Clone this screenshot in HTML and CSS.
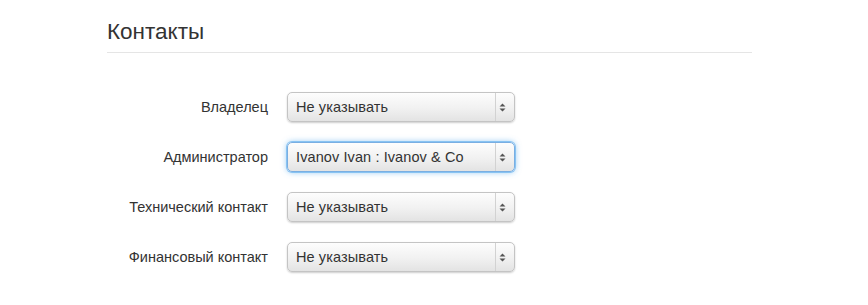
FILE: index.html
```html
<!DOCTYPE html>
<html lang="ru">
<head>
  <meta charset="UTF-8">
  <title>Контакты</title>
  <link rel="stylesheet" href="styles.css">
</head>
<body>
  <div class="container">
    <form class="form-horizontal">
      <div class="legend">Контакты</div>

      <div class="control-group">
        <label class="control-label">Владелец</label>
        <div class="controls">
          <div class="select">
            <span class="select-value">Не указывать</span>
            <span class="select-arrows">
              <svg width="7" height="9" viewBox="0 0 7 9"><path d="M3.5 0.5 L6.5 3.5 L0.5 3.5 Z M0.5 5.5 L6.5 5.5 L3.5 8.5 Z" fill="#555"/></svg>
            </span>
          </div>
        </div>
      </div>

      <div class="control-group">
        <label class="control-label">Администратор</label>
        <div class="controls">
          <div class="select focused">
            <span class="select-value">Ivanov Ivan : Ivanov &amp; Co</span>
            <span class="select-arrows">
              <svg width="7" height="9" viewBox="0 0 7 9"><path d="M3.5 0.5 L6.5 3.5 L0.5 3.5 Z M0.5 5.5 L6.5 5.5 L3.5 8.5 Z" fill="#555"/></svg>
            </span>
          </div>
        </div>
      </div>

      <div class="control-group">
        <label class="control-label">Технический контакт</label>
        <div class="controls">
          <div class="select">
            <span class="select-value">Не указывать</span>
            <span class="select-arrows">
              <svg width="7" height="9" viewBox="0 0 7 9"><path d="M3.5 0.5 L6.5 3.5 L0.5 3.5 Z M0.5 5.5 L6.5 5.5 L3.5 8.5 Z" fill="#555"/></svg>
            </span>
          </div>
        </div>
      </div>

      <div class="control-group">
        <label class="control-label">Финансовый контакт</label>
        <div class="controls">
          <div class="select">
            <span class="select-value">Не указывать</span>
            <span class="select-arrows">
              <svg width="7" height="9" viewBox="0 0 7 9"><path d="M3.5 0.5 L6.5 3.5 L0.5 3.5 Z M0.5 5.5 L6.5 5.5 L3.5 8.5 Z" fill="#555"/></svg>
            </span>
          </div>
        </div>
      </div>
    </form>
  </div>
</body>
</html>
```

FILE: styles.css
```css
body {
  margin: 0;
  background: #fff;
  font-family: "Liberation Sans", Arial, sans-serif;
  font-size: 14.5px;
  line-height: 20px;
  color: #333;
}
.container {
  width: 645px;
  margin-left: 107px;
  padding-top: 12px;
}
.legend {
  font-size: 22.5px;
  line-height: 40px;
  color: #333;
  border-bottom: 1px solid #e5e5e5;
  margin-bottom: 39px;
}
.control-group {
  display: flex;
  align-items: center;
  margin-bottom: 20px;
}
.control-label {
  width: 161px;
  text-align: right;
  margin-right: 19px;
  color: #333;
}
.select {
  display: flex;
  align-items: stretch;
  width: 226px;
  height: 28px;
  border: 1px solid #c4c4c4;
  border-radius: 5px;
  background: linear-gradient(#fdfdfd, #f1f1f1 55%, #e3e3e3);
  box-shadow: 0 1px 2px rgba(0, 0, 0, 0.2);
  color: #333;
  font-size: 14.5px;
  letter-spacing: 0.1px;
}
.select.focused {
  border-color: #79aee2;
  box-shadow: 0 0 0 1px rgba(82, 168, 236, 0.55), 0 0 6px rgba(82, 168, 236, 0.7);
}
.select-value {
  flex: 1;
  padding-left: 8px;
  line-height: 28px;
}
.select-arrows {
  width: 15px;
  padding-left: 3px;
  border-left: 1px solid #d2d2d2;
  display: flex;
  align-items: center;
}
```
